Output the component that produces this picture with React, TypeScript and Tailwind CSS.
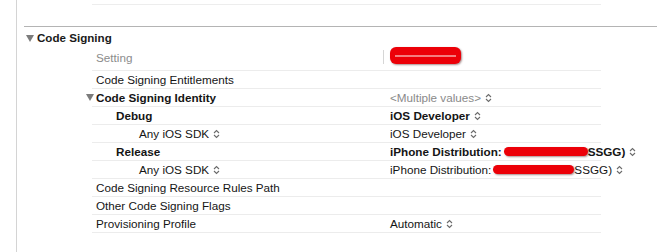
const font = { fontFamily: '"Liberation Sans", Arial, sans-serif' }

function Stepper() {
  return (
    <svg width="7" height="10" viewBox="0 0 7 10" className="ml-[4px] inline-block shrink-0">
      <path d="M1 4 L3.5 1.5 L6 4 M1 6 L3.5 8.5 L6 6" fill="none" stroke="#6b6b6b" strokeWidth="1.1" />
    </svg>
  )
}

function Disclosure({ className }: { className?: string }) {
  return (
    <svg width="8" height="7" viewBox="0 0 8 7" className={className}>
      <polygon points="0,0 8,0 4,7" fill="#7c7c7c" />
    </svg>
  )
}

function Redact({ className }: { className: string }) {
  return (
    <span
      className={`inline-flex items-center px-[5px] rounded-[5px] bg-[#ec0008] shadow-[1px_1px_2px_rgba(60,0,0,0.45)] ${className}`}
    />
  )
}

function Row({
  indent,
  name,
  bold,
  children,
}: {
  indent: string
  name: React.ReactNode
  bold?: boolean
  children?: React.ReactNode
}) {
  return (
    <div className="flex h-[18px] border-b border-[#ececec] leading-[17px] text-[11.7px] text-[#151515]">
      <div className={`w-[298px] shrink-0 flex items-center ${indent} ${bold ? 'font-bold' : ''}`}>{name}</div>
      <div className="flex items-center whitespace-nowrap">{children}</div>
    </div>
  )
}

export default function App() {
  return (
    <div className="w-[657px] h-[252px] bg-white flex overflow-hidden" style={font}>
      <div className="w-[17px] shrink-0 border-r border-[#d4d4d4]" />
      <div className="flex-1 flex flex-col">
        <div className="h-[5px] pl-[75px]">
          <div className="w-[509px] h-[5px] border-b border-[#ededed]" />
        </div>
        <div className="h-[21px]" />
        <div className="ml-[7px] h-px bg-[#b4b4b4]" />
        <div className="h-[22px] flex items-center pl-[9px] gap-[3px] text-[11.6px] font-bold text-[#1a1a1a]">
          <Disclosure />
          <span>Code Signing</span>
        </div>

        <div className="ml-[75px] w-[509px]">
          <div className="flex h-[22px] border-b border-[#ececec] text-[11.7px] leading-[18px]">
            <div className="w-[291px] shrink-0 pl-[4px] text-[#8c8c8c]">Setting</div>
            <div className="w-px h-[14px] mt-[1px] bg-[#d6d6d6]" />
            <div className="pl-[6px]">
              <span className="relative -top-[2px] flex items-center px-[5px] w-[71px] h-[17px] rounded-[6px] bg-[#ec0008] shadow-[1px_1px_2px_rgba(60,0,0,0.45)]">
                <span className="block w-full h-[2px] bg-[#f6b3b3] opacity-70" />
              </span>
            </div>
          </div>

          <Row indent="pl-[4px]" name="Code Signing Entitlements" />
          <Row
            indent="pl-[4px]"
            bold
            name={
              <>
                <Disclosure className="-ml-[10px] mr-[2px]" />
                Code Signing Identity
              </>
            }
          >
            <span className="text-[#8a8a8a]">&lt;Multiple values&gt;</span>
            <Stepper />
          </Row>
          <Row indent="pl-[24px]" bold name="Debug">
            <span className="font-bold">iOS Developer</span>
            <Stepper />
          </Row>
          <Row indent="pl-[47px]" name={<>Any iOS SDK<Stepper /></>}>
            <span>iOS Developer</span>
            <Stepper />
          </Row>
          <Row indent="pl-[24px]" bold name="Release">
            <span className="font-bold">iPhone Distribution:</span>
            <Redact className="ml-[2px] w-[84px] h-[9px] -mt-[1px]" />
            <span className="font-bold">SSGG)</span>
            <Stepper />
          </Row>
          <Row indent="pl-[47px]" name={<>Any iOS SDK<Stepper /></>}>
            <span>iPhone Distribution:</span>
            <Redact className="ml-[2px] w-[81px] h-[9px] -mt-[1px]" />
            <span>SSGG)</span>
            <Stepper />
          </Row>
          <Row indent="pl-[4px]" name="Code Signing Resource Rules Path" />
          <Row indent="pl-[4px]" name="Other Code Signing Flags" />
          <Row indent="pl-[4px]" name="Provisioning Profile">
            <span>Automatic</span>
            <Stepper />
          </Row>
        </div>
      </div>
    </div>
  )
}
